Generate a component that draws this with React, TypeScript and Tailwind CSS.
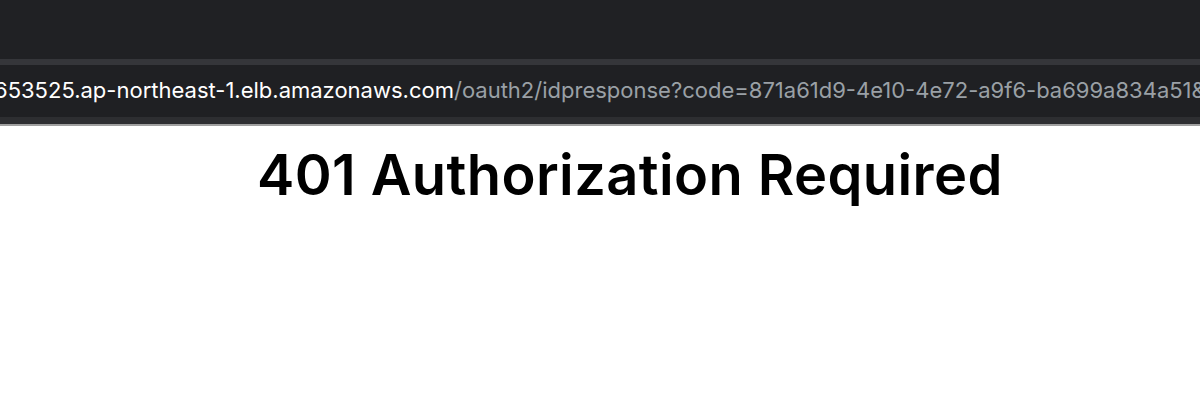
export default function App() {
    return (
        <div className="w-[1200px] h-[418px] overflow-hidden bg-white font-['Inter',sans-serif]">

            {/* Browser chrome */}

            <div className="h-[59px] bg-[#202124]" />
            <div className="h-[6px] bg-[#35363a]" />

            <div className="h-[52px] bg-[#1f2023] flex items-center pb-[2px] overflow-hidden whitespace-nowrap">
                <div className="-ml-[6px] text-[22px] leading-none">
                    <span className="text-white">653525.ap-northeast-1.elb.amazonaws.com</span>
                    <span className="text-[#9aa0a6]">/oauth2/idpresponse?code=871a61d9-4e10-4e72-a9f6-ba699a834a51&amp;state=</span>
                </div>
            </div>

            <div className="h-[7px] bg-[#2d2e31]" />
            <div className="h-[2px] bg-[#a0a0a0]" />

            {/* Page */}

            <div className="pl-[257px] pt-[21px]">
                <h1 className="text-[56px] font-semibold leading-none tracking-[0.4px] text-black">
                    401 Authorization Required
                </h1>
            </div>

        </div>
    )
}
